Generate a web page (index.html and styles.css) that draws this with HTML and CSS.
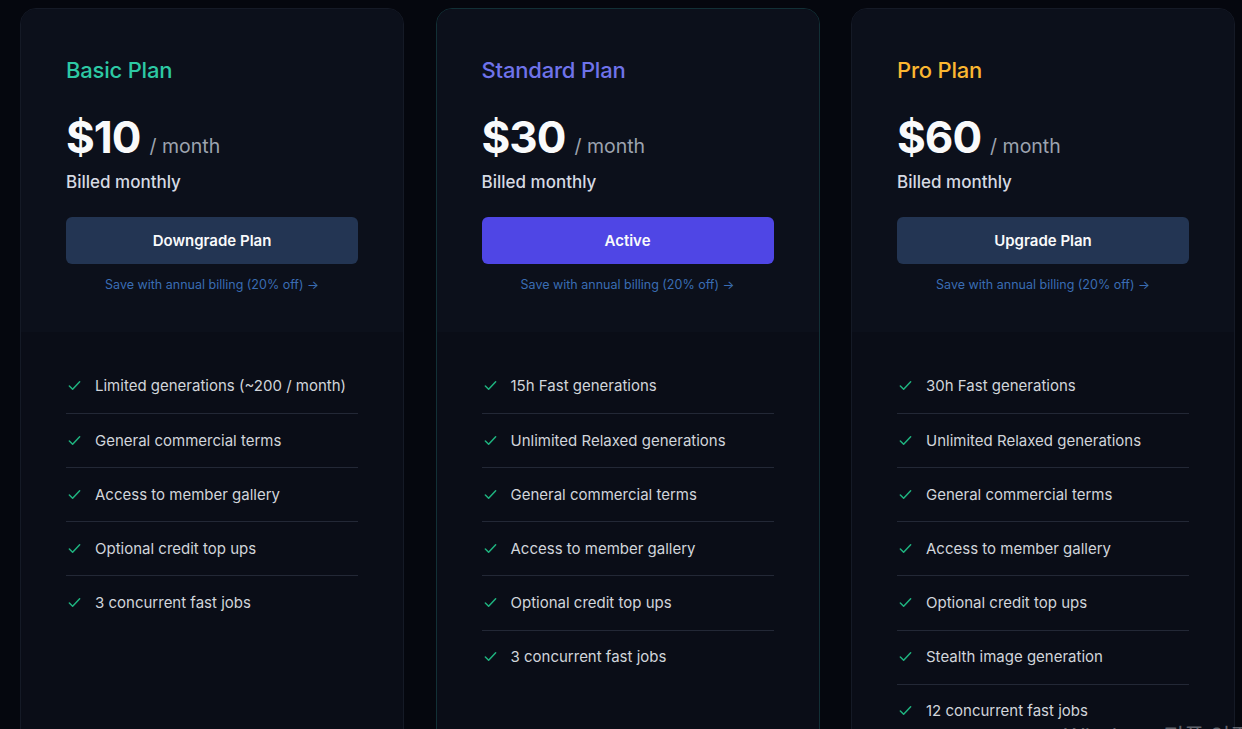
FILE: index.html
```html
<!DOCTYPE html>
<html lang="en">
<head>
<meta charset="utf-8">
<title>Plans</title>
<link rel="stylesheet" href="styles.css">
</head>
<body>
<main class="plans">
  <section class="card">
    <div class="card-head">
      <h2 class="plan-name basic">Basic Plan</h2>
      <div class="price"><span class="amount">$10</span><span class="per">/ month</span></div>
      <p class="billed">Billed monthly</p>
      <button class="btn btn-slate">Downgrade Plan</button>
      <a class="annual" href="#">Save with annual billing (20% off) →</a>
    </div>
    <ul class="features">
      <li><svg class="check" viewBox="0 0 16 16"><path d="M2.5 8.5l3.5 3.5 7.5-8"/></svg>Limited generations (~200 / month)</li>
      <li><svg class="check" viewBox="0 0 16 16"><path d="M2.5 8.5l3.5 3.5 7.5-8"/></svg>General commercial terms</li>
      <li><svg class="check" viewBox="0 0 16 16"><path d="M2.5 8.5l3.5 3.5 7.5-8"/></svg>Access to member gallery</li>
      <li><svg class="check" viewBox="0 0 16 16"><path d="M2.5 8.5l3.5 3.5 7.5-8"/></svg>Optional credit top ups</li>
      <li><svg class="check" viewBox="0 0 16 16"><path d="M2.5 8.5l3.5 3.5 7.5-8"/></svg>3 concurrent fast jobs</li>
    </ul>
  </section>
  <section class="card card-active">
    <div class="card-head">
      <h2 class="plan-name standard">Standard Plan</h2>
      <div class="price"><span class="amount">$30</span><span class="per">/ month</span></div>
      <p class="billed">Billed monthly</p>
      <button class="btn btn-indigo">Active</button>
      <a class="annual" href="#">Save with annual billing (20% off) →</a>
    </div>
    <ul class="features">
      <li><svg class="check" viewBox="0 0 16 16"><path d="M2.5 8.5l3.5 3.5 7.5-8"/></svg>15h Fast generations</li>
      <li><svg class="check" viewBox="0 0 16 16"><path d="M2.5 8.5l3.5 3.5 7.5-8"/></svg>Unlimited Relaxed generations</li>
      <li><svg class="check" viewBox="0 0 16 16"><path d="M2.5 8.5l3.5 3.5 7.5-8"/></svg>General commercial terms</li>
      <li><svg class="check" viewBox="0 0 16 16"><path d="M2.5 8.5l3.5 3.5 7.5-8"/></svg>Access to member gallery</li>
      <li><svg class="check" viewBox="0 0 16 16"><path d="M2.5 8.5l3.5 3.5 7.5-8"/></svg>Optional credit top ups</li>
      <li><svg class="check" viewBox="0 0 16 16"><path d="M2.5 8.5l3.5 3.5 7.5-8"/></svg>3 concurrent fast jobs</li>
    </ul>
  </section>
  <section class="card">
    <div class="card-head">
      <h2 class="plan-name pro">Pro Plan</h2>
      <div class="price"><span class="amount">$60</span><span class="per">/ month</span></div>
      <p class="billed">Billed monthly</p>
      <button class="btn btn-slate">Upgrade Plan</button>
      <a class="annual" href="#">Save with annual billing (20% off) →</a>
    </div>
    <ul class="features">
      <li><svg class="check" viewBox="0 0 16 16"><path d="M2.5 8.5l3.5 3.5 7.5-8"/></svg>30h Fast generations</li>
      <li><svg class="check" viewBox="0 0 16 16"><path d="M2.5 8.5l3.5 3.5 7.5-8"/></svg>Unlimited Relaxed generations</li>
      <li><svg class="check" viewBox="0 0 16 16"><path d="M2.5 8.5l3.5 3.5 7.5-8"/></svg>General commercial terms</li>
      <li><svg class="check" viewBox="0 0 16 16"><path d="M2.5 8.5l3.5 3.5 7.5-8"/></svg>Access to member gallery</li>
      <li><svg class="check" viewBox="0 0 16 16"><path d="M2.5 8.5l3.5 3.5 7.5-8"/></svg>Optional credit top ups</li>
      <li><svg class="check" viewBox="0 0 16 16"><path d="M2.5 8.5l3.5 3.5 7.5-8"/></svg>Stealth image generation</li>
      <li><svg class="check" viewBox="0 0 16 16"><path d="M2.5 8.5l3.5 3.5 7.5-8"/></svg>12 concurrent fast jobs</li>
    </ul>
  </section>
</main>
<div class="watermark">Windows 정품 인증</div>
</body>
</html>
```
FILE: styles.css
```css
* { box-sizing: border-box; }
html, body { height: 100%; }
body {
  margin: 0;
  background: #05070e;
  font-family: Inter, "Noto Sans", "Liberation Sans", sans-serif;
  color: #d1d5db;
  overflow: hidden;
}
.plans {
  display: flex;
  gap: 31.5px;
  padding: 8px 0 0 20px;
  align-items: flex-start;
}
.card {
  width: 384px;
  flex: none;
  min-height: 760px;
  border: 1px solid #151a26;
  border-radius: 16px;
  background: #0a0d17;
  overflow: hidden;
}
.card-active { border-color: #123036; }
.card-head {
  background: #0c101b;
  padding: 47px 45px 0;
  height: 323px;
  display: flex;
  flex-direction: column;
}
.plan-name {
  margin: 0;
  font-size: 22px;
  font-weight: 500;
  line-height: 28px;
  letter-spacing: -0.2px;
}
.basic { color: #2dc9a4; }
.standard { color: #6f73ea; }
.pro { color: #fbb731; }
.price {
  margin-top: 26px;
  display: flex;
  align-items: baseline;
  gap: 9px;
  height: 54px;
}
.amount {
  font-size: 44px;
  font-weight: 700;
  color: #f9fafb;
  letter-spacing: -1px;
  line-height: 54px;
}
.per {
  font-size: 19.5px;
  color: #9ca3af;
}
.billed {
  margin: 6px 0 0;
  font-size: 17px;
  font-weight: 500;
  line-height: 24px;
  color: #d6dae3;
}
.btn {
  margin-top: 23px;
  height: 47px;
  width: 100%;
  border: 0;
  border-radius: 6px;
  font-family: inherit;
  font-size: 15px;
  font-weight: 600;
  color: #f9fafb;
}
.btn-slate { background: #233553; }
.btn-indigo { background: #4f46e5; }
.annual {
  margin-top: 13px;
  text-align: center;
  font-size: 12.5px;
  line-height: 16px;
  color: #3a6db3;
  text-decoration: none;
}
.features {
  list-style: none;
  margin: 0;
  padding: 26px 45px 0;
}
.features li {
  display: flex;
  align-items: center;
  height: 54.15px;
  border-top: 1px solid #232836;
  font-size: 15px;
  color: #d1d5db;
  padding-bottom: 1px;
}
.features li:first-child { border-top: 0; height: 55px; }
.check {
  width: 15px;
  height: 15px;
  margin: 0 13px 0 1px;
  flex: none;
  fill: none;
  stroke: #1fb37f;
  stroke-width: 1.6;
  stroke-linecap: round;
  stroke-linejoin: round;
}
.watermark {
  position: absolute;
  left: 1064px;
  top: 718px;
  font-family: "Noto Sans", "Noto Sans CJK KR", sans-serif;
  font-size: 22px;
  color: rgba(170, 174, 182, 0.55);
  white-space: nowrap;
}
```
